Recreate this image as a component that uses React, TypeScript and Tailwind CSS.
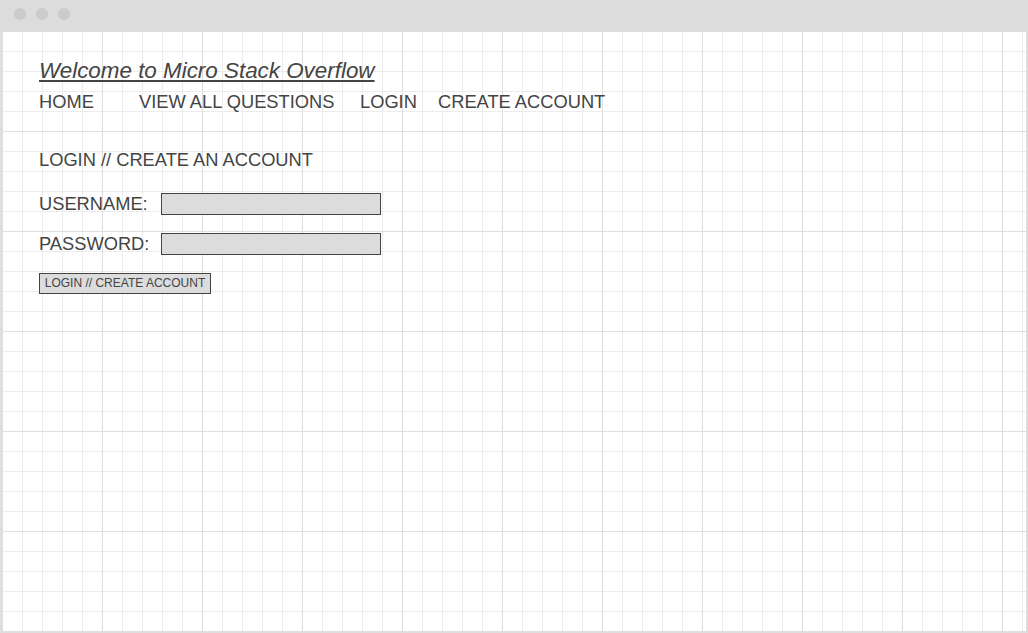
import React from 'react';

const navItems = [
  { label: 'HOME', className: 'w-[100px]' },
  { label: 'VIEW ALL QUESTIONS', className: 'w-[221px]' },
  { label: 'LOGIN', className: 'w-[78px]' },
  { label: 'CREATE ACCOUNT', className: '' },
];

function Field({ label }: { label: string }) {
  return (
    <div className="flex items-center">
      <span className="w-[122px] text-[18.3px] leading-[22px] -mt-[1px]">{label}</span>
      <input
        type="text"
        className="w-[220px] h-[22px] border border-[#444444] bg-[#dcdcdc] outline-none"
      />
    </div>
  );
}

export default function App() {
  return (
    <div className="w-[1028px] h-[633px] flex flex-col bg-white font-['Liberation_Sans',Arial,sans-serif] text-[#444444]">
      {/* window chrome */}
      <div className="h-[31px] bg-[#dcdcdc] flex items-center gap-[10px] pl-[14px] pb-[3px]">
        <span className="w-[12px] h-[12px] rounded-full bg-[#cbcbcb]" />
        <span className="w-[12px] h-[12px] rounded-full bg-[#cbcbcb]" />
        <span className="w-[12px] h-[12px] rounded-full bg-[#cbcbcb]" />
      </div>

      <div className="flex-1 border-x-2 border-b-2 border-[#dedede] pl-[37px] pt-[27px] [background-image:linear-gradient(to_right,#dedede_1px,transparent_1px),linear-gradient(to_bottom,#dedede_1px,transparent_1px),linear-gradient(to_right,#ececec_1px,transparent_1px),linear-gradient(to_bottom,#ececec_1px,transparent_1px)] [background-size:100px_100px,100px_100px,20px_20px,20px_20px]">
        <h1 className="text-[22.4px] leading-[26px] italic underline decoration-[2px] underline-offset-[2px]">
          Welcome to Micro Stack Overflow
        </h1>

        <nav className="flex mt-[7px] text-[18.3px] leading-[22px]">
          {navItems.map((item) => (
            <a key={item.label} className={item.className}>
              {item.label}
            </a>
          ))}
        </nav>

        <h2 className="mt-[36px] text-[18.3px] leading-[22px]">LOGIN // CREATE AN ACCOUNT</h2>

        <div className="mt-[22px] flex flex-col gap-[18px]">
          <Field label="USERNAME:" />
          <Field label="PASSWORD:" />
          <button className="block w-[172px] h-[21px] border border-[#444444] bg-[#dcdcdc] text-[12px] leading-[19px] text-[#444444]">
            LOGIN // CREATE ACCOUNT
          </button>
        </div>
      </div>
    </div>
  );
}
